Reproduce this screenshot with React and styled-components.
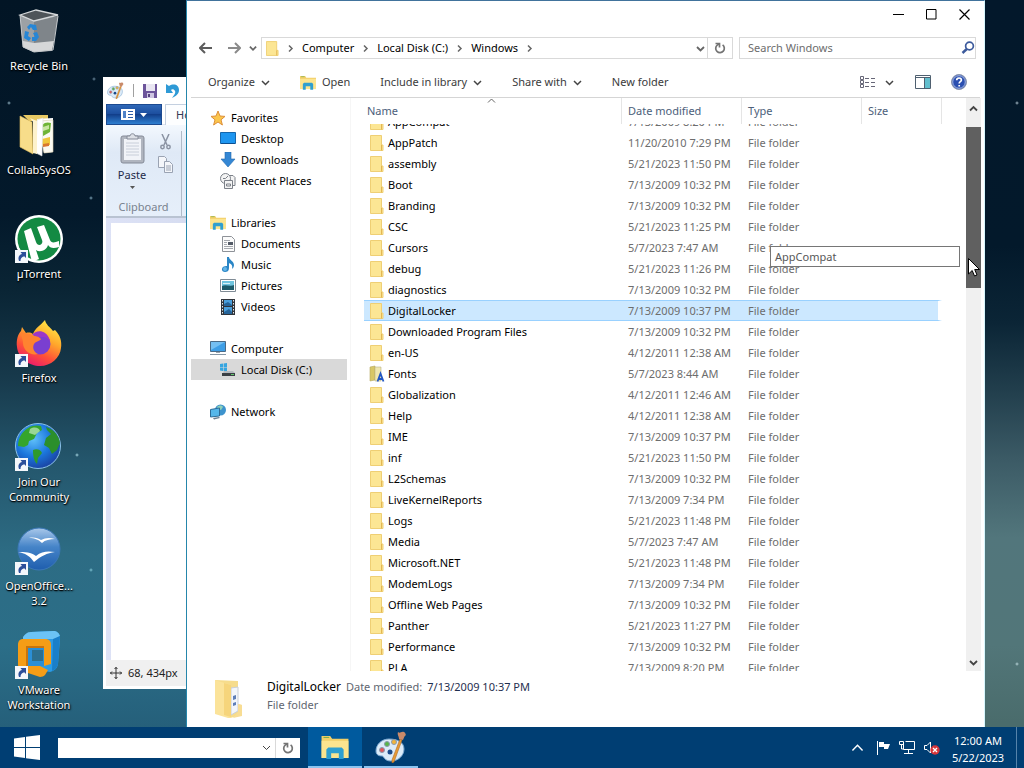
import React, { useLayoutEffect, useRef } from "react";
import styled, { createGlobalStyle, css } from "styled-components";

const GlobalStyle = createGlobalStyle`
  * { box-sizing: border-box; }
  body { margin: 0; }
  body, button, input {
    font-family: "Noto Sans", "Open Sans", sans-serif;
    font-size: 11px;
    line-height: 16px;
  }
  button { border: 0; padding: 0; background: none; color: inherit; cursor: default; }
  svg { display: block; flex: none; }
`;

/* ---------- desktop ---------- */

const Screen = styled.div`
  height: 100vh;
  display: flex;
  flex-direction: column;
  overflow: hidden;
  background:
    radial-gradient(circle at 94px 79px, #6d8ba0 0, transparent 2px),
    radial-gradient(circle at 9px 103px, #8fb0c0 0, transparent 2px),
    radial-gradient(circle at 91px 198px, #7fa5b8 0, transparent 2px),
    radial-gradient(circle at 77px 455px, #a5d4e0 0, transparent 2px),
    radial-gradient(circle at 91px 570px, #7fc4d4 0, transparent 2px),
    radial-gradient(circle at 1017px 103px, #a8bcc8 0, transparent 2px),
    radial-gradient(circle at 1017px 664px, #b8d4d8 0, transparent 2px),
    linear-gradient(#03182b 0%, #03192b 32%, #0b2536 42%, #223f4d 51%, #3c5b66 60%, #52767c 70%, #527679 84%, #4a6c6c 94%) 100% 0 / 30% 100% no-repeat,
    linear-gradient(#021525 0%, #03192b 28%, #0a2535 38%, #17394b 49%, #24566c 60%, #2d6c84 72%, #2b6e88 84%, #255f7a 95%);
`;

const Desktop = styled.main`
  position: relative;
  flex: 1;
  min-height: 0;
`;

const Shortcuts = styled.nav`
  display: flex;
  flex-direction: column;
  width: 78px;
`;

const Shortcut = styled.a`
  display: flex;
  flex-direction: column;
  align-items: center;
  gap: 3px;
  height: 104px;
  padding-top: 7px;
  color: #fff;
  text-decoration: none;
  text-align: center;
  line-height: 15px;
  text-shadow: 1px 1px 2px #000, 0 1px 1px #000;
  white-space: pre-line;
`;

/* ---------- paint window ---------- */

const PaintWindow = styled.section`
  position: absolute;
  left: 103px;
  top: 77px;
  bottom: 38px;
  width: 240px;
  display: flex;
  flex-direction: column;
  padding: 0 3px 3px;
  background: #fff;
  overflow: hidden;
`;

const PaintTitle = styled.div`
  display: flex;
  align-items: center;
  gap: 9px;
  height: 27px;
  padding: 0 1px;
`;

const Separator = styled.span`
  width: 1px;
  height: 13px;
  background: #a0a0a0;
`;

const PaintTabs = styled.div`
  display: flex;
  gap: 3px;
  height: 21px;
  border-bottom: 1px solid #dfe6f0;
`;

const FileMenu = styled.button`
  display: flex;
  align-items: center;
  justify-content: center;
  gap: 5px;
  width: 56px;
  height: 21px;
  background: linear-gradient(#2f68b8, #1d4f9f 45%, #123f8b 50%, #2f7fd0);
  border: 1px solid #1c4a90;
`;

const HomeTab = styled.button`
  width: 60px;
  height: 21px;
  padding-left: 10px;
  text-align: left;
  color: #333a55;
  background: #fdfeff;
  border: 1px solid #c4d0e0;
  border-bottom: 0;
`;

const Ribbon = styled.div`
  display: flex;
  height: 93px;
  padding: 6px 0 0;
  background: linear-gradient(#f3f8fe, #dfe9f6 30%, #e6effa);
  border-bottom: 2px solid #b9c3d2;
`;

const ClipGroup = styled.div`
  display: grid;
  grid-template-columns: 52px 15px;
  grid-template-rows: 1fr 17px;
  width: 76px;
  border-right: 1px solid #b0bac8;
  color: #1f2a4a;
`;

const PasteButton = styled.button`
  display: flex;
  flex-direction: column;
  align-items: center;
  gap: 3px;
  padding-top: 2px;
`;

const ClipTools = styled.div`
  display: flex;
  flex-direction: column;
  align-items: center;
  gap: 6px;
  padding-top: 3px;
`;

const GroupLabel = styled.span`
  grid-column: 1 / -1;
  padding-left: 8px;
  text-align: center;
  color: #79828f;
`;

const CanvasArea = styled.div`
  flex: 1;
  padding: 5px 0 0 5px;
  background: linear-gradient(to right, #dde2f6, #c9d2e6);
`;

const Canvas = styled.div`
  height: 100%;
  background: #fff;
`;

const PaintStatus = styled.div`
  display: flex;
  align-items: center;
  gap: 6px;
  height: 26px;
  padding-left: 4px;
  background: #f0f0f0;
  color: #222;
`;

/* ---------- explorer window ---------- */

const Explorer = styled.section`
  position: absolute;
  left: 186px;
  right: 39px;
  top: 0;
  bottom: 0;
  display: flex;
  flex-direction: column;
  background: #fff;
  border-top: 1px solid #41739c;
  border-left: 1px solid #2586ab;
  border-right: 1px solid #d6f6fd;
`;

const TitleBar = styled.div`
  display: flex;
  justify-content: flex-end;
  height: 36px;
  padding-right: 3px;
`;

const CaptionButton = styled.button`
  display: flex;
  align-items: center;
  justify-content: center;
  width: 33px;
  height: 26px;
`;

const AddressRow = styled.div`
  display: flex;
  align-items: center;
  height: 22px;
  padding: 0 8px 0 12px;
`;

const NavArrows = styled.div`
  display: flex;
  align-items: center;
  gap: 8px;
  width: 62px;
`;

const ForwardButton = styled.button`
  margin-left: 8px;
`;

const Field = styled.div`
  display: flex;
  align-items: center;
  height: 22px;
  border: 1px solid #d9d9d9;
  background: #fff;
`;

const AddressField = styled(Field)`
  flex: 1;
  padding-left: 4px;
`;

const Crumb = styled.button`
  display: flex;
  align-items: center;
  gap: 7px;
  padding-left: 7px;
  color: #000;
`;

const Spacer = styled.span`
  flex: 1;
`;

const RefreshButton = styled.button`
  display: flex;
  align-items: center;
  justify-content: center;
  width: 25px;
  height: 20px;
  margin-left: 2px;
  border-left: 1px solid #d9d9d9;
`;

const SearchField = styled(Field)`
  width: 237px;
  margin-left: 6px;
`;

const SearchInput = styled.input`
  flex: 1;
  min-width: 0;
  border: 0;
  outline: 0;
  padding: 0 8px;
  &::placeholder { color: #6d6d6d; opacity: 1; }
`;

const CommandBar = styled.div`
  display: flex;
  align-items: center;
  height: 39px;
  margin: 0 4px;
  padding: 8px 12px 0 17px;
  border-bottom: 1px solid #d5d5d5;
  color: #3b3b3b;
`;

const Command = styled.button`
  display: flex;
  align-items: center;
  gap: ${(p) => (p.$wide ? 10 : 6)}px;
  margin-right: ${(p) => p.$gap || 30}px;
  height: 22px;
`;

const Body = styled.div`
  display: flex;
  flex: 1;
  min-height: 0;
  padding: 0 3px 0 4px;
`;

const NavPane = styled.nav`
  display: flex;
  flex-direction: column;
  gap: 21px;
  width: 160px;
  padding-top: 9px;
  border-right: 1px solid #f6f6f6;
`;

const NavGroup = styled.div`
  display: flex;
  flex-direction: column;
`;

const NavItem = styled.a`
  display: flex;
  align-items: center;
  gap: 5px;
  height: 21px;
  width: 156px;
  padding-left: ${(p) => (p.$child ? 29 : 19)}px;
  background: ${(p) => (p.$active ? "#d9d9d9" : "transparent")};
  color: #000;
  text-decoration: none;
`;

const FilePane = styled.div`
  position: relative;
  display: flex;
  flex: 1;
  min-width: 0;
  padding-left: 13px;
`;

const FileScroller = styled.div`
  flex: 1;
  min-width: 0;
  overflow: hidden;
`;

const FileTable = styled.table`
  width: 578px;
  table-layout: fixed;
  border-collapse: separate;
  border-spacing: 0;
  color: #6d6d6d;
`;

const HeadCell = styled.th`
  position: sticky;
  top: 0;
  z-index: 1;
  width: ${(p) => p.$w}px;
  height: 26px;
  padding: 0 0 0 ${(p) => (p.$first ? 3 : 6)}px;
  background: #fff;
  border-right: 1px solid #e5e5e5;
  color: #4c607a;
  font-weight: 400;
  text-align: left;
`;

const SortMark = styled.span`
  position: absolute;
  left: 123px;
  top: -2px;
`;

const selected = css`
  background: #cce8ff;
  border-top-color: #99d1ff;
  border-bottom-color: #99d1ff;
`;

const Cell = styled.td`
  height: 21px;
  padding: 0 0 0 6px;
  border: 0 solid transparent;
  border-width: 1px 0;
  white-space: nowrap;
  line-height: 19px;
  ${(p) => p.$on && selected}
  &:first-child { color: #000; }
  &:last-child { border-right-width: 4px; background-clip: padding-box; }
`;

const FileName = styled.span`
  display: flex;
  align-items: center;
  gap: 4px;
`;

const Scrollbar = styled.div`
  display: flex;
  flex-direction: column;
  width: 15px;
  background: #f0f0f0;
`;

const ScrollButton = styled.button`
  display: flex;
  align-items: center;
  justify-content: center;
  height: ${(p) => p.$h}px;
`;

const Thumb = styled.div`
  height: 161px;
  margin-top: 9px;
  background: #606060;
`;

const Tooltip = styled.div`
  position: absolute;
  top: 148px;
  right: 21px;
  width: 190px;
  height: 21px;
  padding: 2px 4px;
  background: #fff;
  border: 1px solid #767676;
  color: #575757;
  z-index: 2;
`;

const Pointer = styled.span`
  position: absolute;
  top: 160px;
  right: 1px;
  z-index: 3;
`;

const DetailsPane = styled.footer`
  display: flex;
  align-items: center;
  gap: 20px;
  height: 56px;
  padding-left: 26px;
  color: #5f6670;
`;

const DetailText = styled.div`
  display: flex;
  flex-direction: column;
  gap: 2px;
  padding-bottom: 6px;
`;

const DetailLine = styled.div`
  display: flex;
  align-items: baseline;
  gap: 5px;
  b { font-size: 12px; font-weight: 400; color: #000; }
  i { font-style: normal; color: #1f2f4f; }
`;

/* ---------- taskbar ---------- */

const Taskbar = styled.footer`
  display: flex;
  align-items: center;
  height: 41px;
  background: #003e73;
  color: #fff;
`;

const StartButton = styled.button`
  display: flex;
  align-items: center;
  justify-content: center;
  width: 54px;
  height: 41px;
`;

const TaskField = styled.div`
  display: flex;
  align-items: center;
  width: 242px;
  height: 20px;
  margin: 0 8px 0 4px;
  background: #fff;
`;

const TaskInput = styled.input`
  flex: 1;
  min-width: 0;
  height: 20px;
  border: 0;
  outline: 0;
`;

const TaskRefresh = styled(RefreshButton)`
  margin-left: 4px;
`;

const TaskButton = styled.button`
  display: flex;
  align-items: center;
  justify-content: center;
  width: 54px;
  height: 41px;
  margin-right: 2px;
  border-bottom: 2px solid #8cc4f0;
  background: ${(p) => (p.$active ? "#005a9e" : "transparent")};
`;

const Tray = styled.div`
  display: flex;
  align-items: center;
  gap: 8px;
`;

const HiddenIcons = styled.button`
  margin-right: 4px;
`;

const Clock = styled.button`
  width: 76px;
  padding-top: 2px;
  line-height: 17px;
  text-align: center;
`;

const ShowDesktop = styled.button`
  width: 8px;
  height: 41px;
  border-left: 1px solid #5683ab;
`;

/* ---------- drawings ---------- */

const Chevron = ({ dir = "down", color = "#444", size = 9, weight = 1.5 }) => {
  const d = {
    down: "M1 3l3.5 3.5L8 3",
    up: "M1 6.5L4.500 3 8 6.500",
    right: "M3 1.500L6 4.500 3 7.500",
  }[dir];
  return (
    <svg width={size} height={size} viewBox="0 0 9 9" fill="none" stroke={color} strokeWidth={weight} aria-hidden="true">
      <path d={d} />
    </svg>
  );
};

const ShortcutArrow = () => (
  <g>
    <rect x="0" y="35" width="13" height="13" fill="#f4f7fb" />
    <path d="M4 46c-1.500-4 .3-6.500 3-7l-1.500-2H11v6l-1.800-1.700C6.500 42 5.500 43.500 5.500 46z" fill="#2c4f9a" />
  </g>
);

const BigIcon = ({ children }) => (
  <svg width="48" height="48" viewBox="0 0 48 48" aria-hidden="true">{children}</svg>
);

const RecycleIcon = () => (
  <BigIcon>
    <path d="M5 8l11 6 27-4-6 34-18 1-11-5z" fill="#8f9498" />
    <path d="M5 8l14 5v32l-11-5z" fill="#9ca1a5" />
    <path d="M19 13l24-4-6 34-18 2z" fill="#7f858a" />
    <path d="M8 34l11 2 20-2-2 9-18 2-11-5z" fill="#d6d7d8" />
    <path d="M5 8L21 3l22 5-24 6z" fill="#4e5459" stroke="#d6d9db" strokeWidth="1.300" />
    <path d="M5 8l3 32 11 5M43 9l-5 34-19 2" fill="none" stroke="#c5c9cc" />
    <path d="M12 20l3-3 6 1 1 5-4 0-2-3-2 3zM10 24l4 1-1 4 3 2-2 3-5-3zM18 26l4-1 2 5-3 4h-4v-4h3z" fill="#2686d6" />
  </BigIcon>
);

const CollabIcon = () => (
  <BigIcon>
    <path d="M8 4h25v6H14z" fill="#e8c964" />
    <path d="M22 8l16-1v34l-9 1z" fill="#fff" />
    <path d="M24 10l14-1v32l-9 1z" fill="#fbfaf2" stroke="#d8cfae" strokeWidth=".6" />
    <path d="M27 14c3-3 6-3 9-2l-1 9-7 4z" fill="#6fb536" />
    <path d="M28 16l6-2v4l-6 2z" fill="#c9e6a0" />
    <path d="M27 28l8-2v8l-8 1z" fill="#f0c63c" />
    <path d="M28 33l6-1v3l-6 1z" fill="#d9772e" />
    <path d="M22 9l6-2-1 38-6-3z" fill="#fff" stroke="#dcdcdc" strokeWidth=".6" />
    <path d="M5 5l12 6 1 32L5 36z" fill="#f7dd8a" stroke="#e0be5c" strokeWidth=".6" />
    <path d="M15 7l7 3v33l-4-1V11z" fill="#fdf2cc" />
  </BigIcon>
);

const TorrentIcon = () => (
  <BigIcon>
    <circle cx="24" cy="24" r="24" fill="#fff" />
    <circle cx="24" cy="24" r="21.500" fill="#138a43" />
    <path d="M9 16l7-3 5 14c1.500 5 8 3 6-2L22 12l7-2 6 15c1 3 4 3 9 1v6c-6 2-9 1-11-2-1 5-8 8-12 5l3 9-7 3z" fill="#fff" />
    <ShortcutArrow />
  </BigIcon>
);

const FirefoxIcon = () => (
  <BigIcon>
    <defs>
      <linearGradient id="fxBody" x1=".8" y1="0" x2=".3" y2="1">
        <stop offset="0" stopColor="#fff04a" />
        <stop offset=".4" stopColor="#ffa62b" />
        <stop offset=".7" stopColor="#ff5138" />
        <stop offset="1" stopColor="#e8186f" />
      </linearGradient>
    </defs>
    <path d="M30 1c1 5 5 7 8 11l2-1c5 5 7 11 6 18-1 10-10 18-21 18S3 39 2 28C1 21 3 15 6 12l1-4 4 6c3-1 6 0 7 1 2-6 7-8 12-14z" fill="url(#fxBody)" />
    <circle cx="25" cy="25" r="10.500" fill="#7a3fd0" />
    <path d="M17 16c3-4 9-5 13-2 3 2 5 6 5 9-2-4-5-5-8-5-4 1-5-1-10-2z" fill="#9b38c8" />
    <path d="M6 13c4 1 7 2 9 2l3 2c3 0 5 0 8 3-1 2-5 2-7 5-2 4 0 8 4 10-8 2-15-4-15-11 0-4-2-6-2-11z" fill="#ff8330" />
    <ShortcutArrow />
  </BigIcon>
);

const GlobeIcon = () => (
  <BigIcon>
    <defs>
      <radialGradient id="sea" cx=".4" cy=".35" r=".7">
        <stop offset="0" stopColor="#5fc0fa" />
        <stop offset=".55" stopColor="#1b76dc" />
        <stop offset="1" stopColor="#1a3f9e" />
      </radialGradient>
    </defs>
    <circle cx="23" cy="23" r="22.500" fill="url(#sea)" stroke="#8cc3e8" />
    <path d="M6 12C11 4 19 1 26 3l1 4-5 3-3 6-5 2-1 4-4 2-6-1c0-4 1-8 3-11z" fill="#35a52c" />
    <path d="M18 27c4-2 8 0 9 3l-4 5-1 6c-3-3-4-8-4-14z" fill="#2f9a2a" />
    <path d="M31 4c7 2 13 8 14 16l-3 7-5 4-3-6-5-3 2-7 5-4-4-4z" fill="#2b8f2b" />
    <path d="M15 6c5-3 9-1 10 2l-5 4-6-2z" fill="#c4ecc0" opacity=".7" />
    <ShortcutArrow />
  </BigIcon>
);

const OfficeIcon = () => (
  <BigIcon>
    <defs>
      <linearGradient id="oo" x1="0" y1="0" x2="0" y2="1">
        <stop offset="0" stopColor="#a9c8ea" />
        <stop offset=".45" stopColor="#4584c8" />
        <stop offset="1" stopColor="#1f5eae" />
      </linearGradient>
    </defs>
    <circle cx="24" cy="22" r="21" fill="url(#oo)" stroke="#3c78b8" />
    <path d="M14 11c5-1 9 0 12 2 4-2 8-3 14-1-5 0-10 1-13 4-3-3-7-5-13-5z" fill="#fff" />
    <path d="M3 25c7 0 13 0 18 4 6-5 12-5 19-4-8 1-14 4-21 10-4-6-9-9-16-10z" fill="#fff" />
    <ShortcutArrow />
  </BigIcon>
);

const VmwareIcon = () => (
  <BigIcon>
    <path d="M16 1l22-1c5 0 7 3 7 8l-2 25c-1 5-4 7-8 8L16 38 10 8z" fill="#2b9be6" />
    <path d="M8 6c2-3 4-5 8-5l22-1c4 0 6 2 7 5l-5 3H8z" fill="#6cc3f5" />
    <path d="M38 8l7-3-2 28c-1 4-3 6-6 7z" fill="#1a7fc9" />
    <path d="M8 8h22c4 0 6 2 6 6v19l-7 2V15H11v20h14l8 4-3 5c-1 1-3 2-5 2L10 41c-5-1-7-4-7-8V14c0-4 2-6 5-6z" fill="#f59d16" />
    <path d="M11 15h18v2H13v18h-2z" fill="#c9740c" />
    <path d="M13 17h16v18H13z" fill="#2b8fd6" />
    <path d="M17 19h11v11H17z" fill="#2d6f8e" />
    <ShortcutArrow />
  </BigIcon>
);

const PaletteIcon = ({ size = 16 }) => (
  <svg width={size} height={size} viewBox="0 0 32 32" aria-hidden="true">
    <path d="M14 8C6 8 1 14 1 20c0 4 3 5 6 5 2 0 2 5 9 5 8 0 13-6 13-12 0-7-7-10-15-10z" fill="#dcebf8" stroke="#7aa7d0" />
    <circle cx="15" cy="21" r="2.500" fill="#1b4a8a" />
    <circle cx="7" cy="19" r="2.500" fill="#e0585c" stroke="#8a9ab0" />
    <circle cx="12" cy="13" r="2.500" fill="#58b548" stroke="#8a9ab0" />
    <circle cx="19" cy="11" r="2.500" fill="#f2b43a" stroke="#8a9ab0" />
    <path d="M25 8l2 1-8 22-2 1v-3z" fill="#e79a35" stroke="#b26a24" strokeWidth=".6" />
    <path d="M23 1c2 2 3-1 6 0 2 1 1 2 2 3-2 1-2 3-3 5l-4-1c0-3-2-4-1-7z" fill="#c98a6a" />
  </svg>
);

const Floppy = () => (
  <svg width="14" height="14" viewBox="0 0 14 14" aria-hidden="true">
    <path d="M0 0h14v14H0z" fill="#6d559b" />
    <path d="M3 0h9v7H3z" fill="#e9e6f2" />
    <path d="M4 9h7v5H4z" fill="#cfc6e2" />
    <path d="M5 10h2v3H5z" fill="#57427f" />
  </svg>
);

const Undo = () => (
  <svg width="14" height="15" viewBox="0 0 14 15" aria-hidden="true">
    <path d="M0 1l3 2c5-3 10-1 10 4 0 4-3 6-7 8 2-3 4-5 3-7-1-2-3-2-4-1l2 3H0z" fill="#2e9ad6" />
  </svg>
);

const Clipboard = () => (
  <svg width="25" height="31" viewBox="0 0 25 31" aria-hidden="true">
    <rect x="1" y="3" width="23" height="27" rx="2" fill="#b0b5bf" stroke="#858b98" />
    <rect x="4" y="6" width="17" height="21" fill="#f1f3f8" />
    <path d="M6 10h13M6 13h13M6 16h13M6 19h13M6 22h13" stroke="#c8ced9" />
    <path d="M7 6V3h3c0-3 5-3 5 0h3v3z" fill="#dde0e6" stroke="#858b98" />
  </svg>
);

const Scissors = () => (
  <svg width="11" height="16" viewBox="0 0 11 16" fill="none" stroke="#8b93a3" strokeWidth="1.500" aria-hidden="true">
    <path d="M2 0l5 11M9 0L4 11" />
    <circle cx="2.500" cy="13" r="1.700" />
    <circle cx="8.500" cy="13" r="1.700" />
  </svg>
);

const Copy = () => (
  <svg width="15" height="17" viewBox="0 0 15 17" fill="#f4f6fa" stroke="#9aa3b3" aria-hidden="true">
    <path d="M.5.5h6l2 2v9h-8z" />
    <path d="M6.500 5.500h5l3 3v8h-8zM8 10h5M8 12h5M8 14h5" />
  </svg>
);

const BackArrow = ({ color, flip }) => (
  <svg width="13" height="12" viewBox="0 0 13 12" fill="none" stroke={color} strokeWidth="2" aria-hidden="true">
    <path d={flip ? "M0 6h12M7 1l5 5-5 5" : "M13 6H1M6 1L1 6l5 5"} />
  </svg>
);

const Refresh = () => (
  <svg width="12" height="12" viewBox="0 0 12 12" fill="none" stroke="#747474" strokeWidth="1.700" aria-hidden="true">
    <path d="M8.600 2.900A4.300 4.300 0 1 1 3.200 3.100L5 2" />
    <path d="M1.500 1.500h4v4" />
  </svg>
);

const Folder = ({ w = 14, h = 16 }) => (
  <svg width={w} height={h} viewBox="0 0 14 16" aria-hidden="true">
    <path d="M.5.5h11v9.500h1.500v5.500H.5z" fill="#fce694" stroke="#efcf74" />
    <path d="M11.500 10v5.500" stroke="#e3b654" />
  </svg>
);

const FontsFolder = () => (
  <svg width="14" height="16" viewBox="0 0 14 16" overflow="visible" aria-hidden="true">
    <path d="M0 1l5-1v14l-5 1z" fill="#d8c766" stroke="#b5a860" strokeWidth=".6" />
    <path d="M5 1h6v14H5z" fill="#efe7b0" stroke="#b8b287" strokeWidth=".6" />
    <path d="M7.500 15.500l3-8 3 8M8.500 13h4" fill="none" stroke="#2257c4" strokeWidth="1.800" />
  </svg>
);

const LibraryIcon = ({ w = 16, h = 15 }) => (
  <svg width={w} height={h} viewBox="0 0 28 25" aria-hidden="true">
    <path d="M0 1h9l2 3h17v20H0z" fill="#f1cf68" />
    <path d="M0 6h28v18H0z" fill="#fce48f" />
    <path d="M2 2h6v1H2z" fill="#6aa84f" />
    <path d="M5 25V15l2-2h14l2 2v10h-5v-6h-8v6z" fill="#2f9fd0" />
  </svg>
);

const Star = () => (
  <svg width="16" height="16" viewBox="0 0 16 16" aria-hidden="true">
    <path d="M8 1l2 5 5 .4-4 3.400 1.400 5.200L8 12l-4.400 3L5 9.800 1 6.400 6 6z" fill="#fbc64c" stroke="#dd8f3a" />
  </svg>
);

const DesktopIcon = () => (
  <svg width="16" height="13" viewBox="0 0 16 13" aria-hidden="true">
    <path d="M.5.500h15v11H.5z" fill="#1e96f0" stroke="#1567ad" />
    <path d="M1 11h14v1H1z" fill="#0d4f90" />
  </svg>
);

const DownloadIcon = () => (
  <svg width="16" height="16" viewBox="0 0 16 16" aria-hidden="true">
    <path d="M5 0h6v7h4l-7 8-7-8h4z" fill="#3487d4" stroke="#2268ad" strokeWidth=".6" />
  </svg>
);

const RecentIcon = () => (
  <svg width="16" height="16" viewBox="0 0 16 16" fill="#f4f4f4" stroke="#7c8189" aria-hidden="true">
    <path d="M8 2.500h5l2 2v8H8z" />
    <circle cx="5.500" cy="5.500" r="5" />
    <path d="M5.500 5.500L8 3M5.500 5.500H3" />
    <path d="M4.500 7.500h8v8h-8zM6.500 11h4v2h-4z" />
  </svg>
);

const DocumentIcon = () => (
  <svg width="16" height="16" viewBox="0 0 16 16" aria-hidden="true">
    <path d="M2.500.5h9l3 3v12h-12z" fill="#fbfbfb" stroke="#8e9298" />
    <path d="M4 4.500h6M4 6.500h3M4 8.500h3M4 10.500h9M4 12.500h9" stroke="#a4a8ae" />
    <path d="M8 6h5v3H8z" fill="#535a66" />
  </svg>
);

const MusicIcon = () => (
  <svg width="16" height="16" viewBox="0 0 16 16" aria-hidden="true">
    <path d="M7 0h2c0 3 5 4 5 8 0 2-1 3-2 4 1-4-1-5-3-6v5c0 3-2 4-4 4-3 0-4-3-2-5 1-1 3-1 4-1z" fill="#2a86c6" />
    <circle cx="5" cy="12" r="2" fill="#65b6e8" />
  </svg>
);

const PictureIcon = () => (
  <svg width="16" height="13" viewBox="0 0 16 13" aria-hidden="true">
    <path d="M.5.500h15v12H.5z" fill="#fff" stroke="#7f8b95" />
    <path d="M2 2h12v9H2z" fill="#6fc4df" />
    <path d="M2 7c4-2 8 1 12-1v5H2z" fill="#1c5b6b" />
    <path d="M3 4h7v1H3z" fill="#d7f1f8" />
  </svg>
);

const VideoIcon = () => (
  <svg width="16" height="16" viewBox="0 0 16 16" aria-hidden="true">
    <path d="M1 0h14v16H1z" fill="#30343a" />
    <path d="M4 1h8v6H4zM4 8h8v7H4z" fill="#4a9fdc" />
    <path d="M4 5l4-2 4 3v1H4zM4 13l5-3 3 3v2H4z" fill="#256398" />
    <path d="M2.500 1v15M13.500 1v15" stroke="#e6e9ec" strokeDasharray="1.500 1.500" />
  </svg>
);

const ComputerIcon = () => (
  <svg width="16" height="15" viewBox="0 0 16 15" aria-hidden="true">
    <path d="M.5.500h15v10H.5z" fill="#3e9ee6" stroke="#4b6a86" />
    <path d="M1 1h14L1 9z" fill="#74bff2" />
    <path d="M6 11h4v1H6z" fill="#9aa5b0" />
    <path d="M0 13h16v1H0z" fill="#8596a5" />
  </svg>
);

const DiskIcon = () => (
  <svg width="16" height="14" viewBox="0 0 16 14" aria-hidden="true">
    <path d="M0 1l3-.5V4H0zM3.600.4L7 0v4H3.600zM0 4.600h3V8l-3-.5zM3.600 4.600H7v4l-3.400-.5z" fill="#35a5e0" />
    <path d="M4 8h9l2 2H3z" fill="#b5babf" />
    <path d="M2 10h13v3H2z" fill="#3b4045" />
    <path d="M11 11h3v1h-3z" fill="#62c96a" />
  </svg>
);

const NetworkIcon = () => (
  <svg width="16" height="16" viewBox="0 0 16 16" aria-hidden="true">
    <circle cx="10.500" cy="6" r="5.500" fill="#3d93cd" />
    <path d="M7 3c2-2 5-2 6 0l-2 3-3-1z" fill="#8fd0b8" />
    <path d="M.5 5.500l9-1.500v8l-9 1z" fill="#55b7ea" stroke="#2d6c98" />
    <path d="M3 14l6-1 1 1-6 1.500z" fill="#6a7f90" />
  </svg>
);

const ViewIcon = () => (
  <svg width="15" height="13" viewBox="0 0 15 13" fill="none" stroke="#667" aria-hidden="true">
    <path d="M.5.5h3v3h-3zM.5 4.500h3v3h-3zM.5 8.500h3v3h-3z" />
    <path d="M5 2.500h4M5 6.500h4M5 10.500h4M11 2.500h4M11 6.500h4M11 10.500h4" />
  </svg>
);

const PaneIcon = () => (
  <svg width="16" height="14" viewBox="0 0 16 14" aria-hidden="true">
    <path d="M.5.5h15v13H.5z" fill="#fff" stroke="#4f6070" />
    <path d="M0 2.500h16" stroke="#4f6070" />
    <path d="M10 3h5v10h-5z" fill="#62bfce" />
    <path d="M9.500 3v10" stroke="#4f6070" />
  </svg>
);

const HelpIcon = () => (
  <svg width="16" height="16" viewBox="0 0 16 16" aria-hidden="true">
    <circle cx="8" cy="8" r="7.500" fill="#2b4fb0" stroke="#8c96ad" />
    <circle cx="8" cy="8" r="6.300" fill="none" stroke="#c5d2ee" strokeWidth=".8" />
    <path d="M5.700 6.300c0-3 4.700-3 4.700-.3 0 1.700-2.200 1.700-2.200 3.500M8.200 11v1.600" fill="none" stroke="#fff" strokeWidth="1.700" />
  </svg>
);

const Magnifier = () => (
  <svg width="14" height="14" viewBox="0 0 14 14" fill="none" stroke="#3c5a9c" aria-hidden="true">
    <circle cx="8.500" cy="5" r="3.900" strokeWidth="1.700" />
    <path d="M5.800 8L1.500 12" strokeWidth="2.400" />
  </svg>
);

const OpenFolder = () => (
  <svg width="34" height="40" viewBox="0 0 34 40" aria-hidden="true">
    <path d="M2 1l23 1v23l4 1v10l-12 3z" fill="#f6dc8c" />
    <path d="M18 9l7-1v24l-7 4z" fill="#f3f6fa" stroke="#c9cfd8" strokeWidth="1" />
    <path d="M20 17l3-1v4l-3 1zM20 24l3-1v3l-3 1z" fill="#5f7fb8" />
    <path d="M2 1l16 5v33l-3 0L2 35z" fill="#fbe39a" />
    <path d="M11 4l7 2v32l-7-2z" fill="#f6d57c" />
    <path d="M25 25l4 1v11l-9 2 5-6z" fill="#f8dd94" />
  </svg>
);

const WindowsLogo = () => (
  <svg width="26" height="25" viewBox="0 0 26 25" fill="#fff" aria-hidden="true">
    <path d="M0 3.500l11-1.600V12H0zM12 1.700L26 0v12H12zM0 13h11v10L0 21.500zM12 13h14v12l-14-1.700z" />
  </svg>
);

const FlagIcon = () => (
  <svg width="15" height="15" viewBox="0 0 15 15" aria-hidden="true">
    <path d="M1.500 1v14" stroke="#fff" />
    <path d="M3 2h5v2h6l-2 5H8V7H3z" fill="#fff" />
  </svg>
);

const LanIcon = () => (
  <svg width="16" height="15" viewBox="0 0 16 15" fill="none" stroke="#fff" aria-hidden="true">
    <path d="M4.500 3.500v6h11v-8h-9M9.500 10v3M5 13.500h9" />
    <path d="M.5 1.500h4v3h-4zM2.500 5v4h2" />
  </svg>
);

const MutedIcon = () => (
  <svg width="17" height="15" viewBox="0 0 17 15" aria-hidden="true">
    <path d="M1.500 5.500H4L7.500 2v11L4 9.500H1.500z" fill="none" stroke="#fff" />
    <circle cx="12" cy="10" r="4.700" fill="#d8363a" />
    <path d="M10 8l4 4M14 8l-4 4" stroke="#fff" strokeWidth="1.300" />
  </svg>
);

/* ---------- data ---------- */

const shortcuts = [
  ["Recycle Bin", RecycleIcon],
  ["CollabSysOS", CollabIcon],
  ["µTorrent", TorrentIcon],
  ["Firefox", FirefoxIcon],
  ["Join Our\nCommunity", GlobeIcon],
  ["OpenOffice...\n3.2", OfficeIcon],
  ["VMware\nWorkstation", VmwareIcon],
];

const navGroups = [
  [["Favorites", Star], ["Desktop", DesktopIcon], ["Downloads", DownloadIcon], ["Recent Places", RecentIcon]],
  [["Libraries", LibraryIcon], ["Documents", DocumentIcon], ["Music", MusicIcon], ["Pictures", PictureIcon], ["Videos", VideoIcon]],
  [["Computer", ComputerIcon], ["Local Disk (C:)", DiskIcon]],
  [["Network", NetworkIcon]],
];

const files = [
  ["AppCompat", "7/13/2009 8:20 PM"],
  ["AppPatch", "11/20/2010 7:29 PM"],
  ["assembly", "5/21/2023 11:50 PM"],
  ["Boot", "7/13/2009 10:32 PM"],
  ["Branding", "7/13/2009 10:32 PM"],
  ["CSC", "5/21/2023 11:25 PM"],
  ["Cursors", "5/7/2023 7:47 AM"],
  ["debug", "5/21/2023 11:26 PM"],
  ["diagnostics", "7/13/2009 10:32 PM"],
  ["DigitalLocker", "7/13/2009 10:37 PM"],
  ["Downloaded Program Files", "7/13/2009 10:32 PM"],
  ["en-US", "4/12/2011 12:38 AM"],
  ["Fonts", "5/7/2023 8:44 AM"],
  ["Globalization", "4/12/2011 12:46 AM"],
  ["Help", "4/12/2011 12:38 AM"],
  ["IME", "7/13/2009 10:37 PM"],
  ["inf", "5/21/2023 11:50 PM"],
  ["L2Schemas", "7/13/2009 10:32 PM"],
  ["LiveKernelReports", "7/13/2009 7:34 PM"],
  ["Logs", "5/21/2023 11:48 PM"],
  ["Media", "5/7/2023 7:47 AM"],
  ["Microsoft.NET", "5/21/2023 11:48 PM"],
  ["ModemLogs", "7/13/2009 7:34 PM"],
  ["Offline Web Pages", "7/13/2009 10:32 PM"],
  ["Panther", "5/21/2023 11:27 PM"],
  ["Performance", "7/13/2009 10:32 PM"],
  ["PLA", "7/13/2009 8:20 PM"],
];

const SELECTED = "DigitalLocker";
const SCROLL_OFFSET = 13;

/* ---------- sections ---------- */

function Paint() {
  return (
    <PaintWindow aria-label="Paint">
      <PaintTitle>
        <PaletteIcon size={17} />
        <Separator />
        <Floppy />
        <Undo />
      </PaintTitle>
      <PaintTabs>
        <FileMenu aria-label="Paint menu">
          <svg width="14" height="11" viewBox="0 0 14 11" aria-hidden="true">
            <path d="M0 0h14v11H0z" fill="#fff" />
            <path d="M2 2h3v7H2z" fill="#4f82c8" />
            <path d="M7 2.500h5M7 5.500h5M7 8.500h5" stroke="#2c5da8" />
          </svg>
          <svg width="7" height="4" viewBox="0 0 7 4" fill="#fff" aria-hidden="true"><path d="M0 0h7L3.500 4z" /></svg>
        </FileMenu>
        <HomeTab>Home</HomeTab>
      </PaintTabs>
      <Ribbon>
        <ClipGroup>
          <PasteButton>
            <Clipboard />
            Paste
            <svg width="5" height="3" viewBox="0 0 5 3" fill="#555" aria-hidden="true"><path d="M0 0h5L2.500 3z" /></svg>
          </PasteButton>
          <ClipTools>
            <Scissors />
            <Copy />
          </ClipTools>
          <GroupLabel>Clipboard</GroupLabel>
        </ClipGroup>
      </Ribbon>
      <CanvasArea><Canvas /></CanvasArea>
      <PaintStatus>
        <svg width="12" height="12" viewBox="0 0 12 12" fill="none" stroke="#333" aria-hidden="true">
          <path d="M6 0v12M0 6h12M4.500 2L6 .5 7.500 2M4.500 10L6 11.500 7.500 10M2 4.500L.5 6 2 7.500M10 4.500L11.500 6 10 7.500" />
        </svg>
        68, 434px
      </PaintStatus>
    </PaintWindow>
  );
}

function FileList() {
  const scroller = useRef(null);
  useLayoutEffect(() => {
    scroller.current.scrollTop = SCROLL_OFFSET;
  }, []);
  return (
    <FilePane>
      <FileScroller ref={scroller}>
        <FileTable>
          <thead>
            <tr>
              <HeadCell $w={258} $first>Name<SortMark><Chevron dir="up" color="#666" weight={1} /></SortMark></HeadCell>
              <HeadCell $w={120}>Date modified</HeadCell>
              <HeadCell $w={120}>Type</HeadCell>
              <HeadCell $w={80}>Size</HeadCell>
            </tr>
          </thead>
          <tbody>
            {files.map(([name, date]) => {
              const on = name === SELECTED;
              return (
                <tr key={name} aria-selected={on}>
                  <Cell $on={on}>
                    <FileName>{name === "Fonts" ? <FontsFolder /> : <Folder />}{name}</FileName>
                  </Cell>
                  <Cell $on={on}>{date}</Cell>
                  <Cell $on={on}>File folder</Cell>
                  <Cell $on={on} />
                </tr>
              );
            })}
          </tbody>
        </FileTable>
      </FileScroller>
      <Scrollbar>
        <ScrollButton $h={20} aria-label="Scroll up"><Chevron dir="up" weight={1.800} /></ScrollButton>
        <Thumb />
        <Spacer />
        <ScrollButton $h={17} aria-label="Scroll down"><Chevron weight={1.800} /></ScrollButton>
      </Scrollbar>
      <Tooltip role="tooltip">AppCompat</Tooltip>
      <Pointer>
        <svg width="12" height="19" viewBox="0 0 12 19" aria-hidden="true">
          <path d="M.5.5v15.500l3.700-3.500 2.300 5.500 2.500-1-2.300-5.500h4.800z" fill="#fff" stroke="#000" />
        </svg>
      </Pointer>
    </FilePane>
  );
}

function ExplorerWindow() {
  return (
    <Explorer aria-label="Windows Explorer">
      <TitleBar>
        <CaptionButton aria-label="Minimize">
          <svg width="11" height="11" viewBox="0 0 11 11" stroke="#000" aria-hidden="true"><path d="M0 5.500h11" /></svg>
        </CaptionButton>
        <CaptionButton aria-label="Maximize">
          <svg width="11" height="11" viewBox="0 0 11 11" fill="none" stroke="#000" aria-hidden="true"><path d="M.5.5h9.500v9.500H.5z" /></svg>
        </CaptionButton>
        <CaptionButton aria-label="Close">
          <svg width="11" height="11" viewBox="0 0 11 11" stroke="#000" strokeWidth="1.200" aria-hidden="true"><path d="M.5.5l10 10M10.500.5l-10 10" /></svg>
        </CaptionButton>
      </TitleBar>
      <AddressRow>
        <NavArrows>
          <button aria-label="Back"><BackArrow color="#5c5c5c" /></button>
          <ForwardButton aria-label="Forward"><BackArrow color="#8a8a8a" flip /></ForwardButton>
          <button aria-label="Recent pages"><Chevron size={8} color="#666" weight={2} /></button>
        </NavArrows>
        <AddressField>
          <Folder w={13} h={15} />
          <Crumb><Chevron dir="right" color="#666" />Computer</Crumb>
          <Crumb><Chevron dir="right" color="#666" />Local Disk (C:)</Crumb>
          <Crumb><Chevron dir="right" color="#666" />Windows</Crumb>
          <Crumb aria-label="More"><Chevron dir="right" color="#666" /></Crumb>
          <Spacer />
          <button aria-label="Address history"><Chevron color="#666" weight={1.800} /></button>
          <RefreshButton aria-label="Refresh"><Refresh /></RefreshButton>
        </AddressField>
        <SearchField>
          <SearchInput type="text" placeholder="Search Windows" aria-label="Search Windows" />
          <Magnifier />
        </SearchField>
      </AddressRow>
      <CommandBar>
        <Command>Organize<Chevron /></Command>
        <Command><LibraryIcon />Open</Command>
        <Command>Include in library<Chevron /></Command>
        <Command>Share with<Chevron /></Command>
        <Command>New folder</Command>
        <Spacer />
        <Command $wide $gap={21} aria-label="Change view"><ViewIcon /><Chevron /></Command>
        <Command $gap={20} aria-label="Preview pane"><PaneIcon /></Command>
        <Command $gap={1} aria-label="Help"><HelpIcon /></Command>
      </CommandBar>
      <Body>
        <NavPane>
          {navGroups.map((group) => (
            <NavGroup key={group[0][0]}>
              {group.map(([label, Icon], i) => (
                <NavItem key={label} href="#" $child={i > 0} $active={label === "Local Disk (C:)"}>
                  <Icon />
                  {label}
                </NavItem>
              ))}
            </NavGroup>
          ))}
        </NavPane>
        <FileList />
      </Body>
      <DetailsPane>
        <OpenFolder />
        <DetailText>
          <DetailLine><b>DigitalLocker</b><span>Date modified:</span><i>7/13/2009 10:37 PM</i></DetailLine>
          <DetailLine>File folder</DetailLine>
        </DetailText>
      </DetailsPane>
    </Explorer>
  );
}

export default function App() {
  return (
    <Screen>
      <GlobalStyle />
      <Desktop>
        <Shortcuts>
          {shortcuts.map(([label, Icon]) => (
            <Shortcut key={label} href="#"><Icon />{label}</Shortcut>
          ))}
        </Shortcuts>
        <Paint />
        <ExplorerWindow />
      </Desktop>
      <Taskbar>
        <StartButton aria-label="Start"><WindowsLogo /></StartButton>
        <TaskField>
          <TaskInput type="text" aria-label="Address" />
          <button aria-label="Address list"><Chevron weight={1} /></button>
          <TaskRefresh aria-label="Go"><Refresh /></TaskRefresh>
        </TaskField>
        <TaskButton $active aria-label="File Explorer"><LibraryIcon w={28} h={24} /></TaskButton>
        <TaskButton aria-label="Paint"><PaletteIcon size={32} /></TaskButton>
        <Spacer />
        <Tray>
          <HiddenIcons aria-label="Show hidden icons"><Chevron dir="up" size={13} color="#fff" weight={1} /></HiddenIcons>
          <FlagIcon />
          <LanIcon />
          <MutedIcon />
        </Tray>
        <Clock>12:00 AM<br />5/22/2023</Clock>
        <ShowDesktop aria-label="Show desktop" />
      </Taskbar>
    </Screen>
  );
}
